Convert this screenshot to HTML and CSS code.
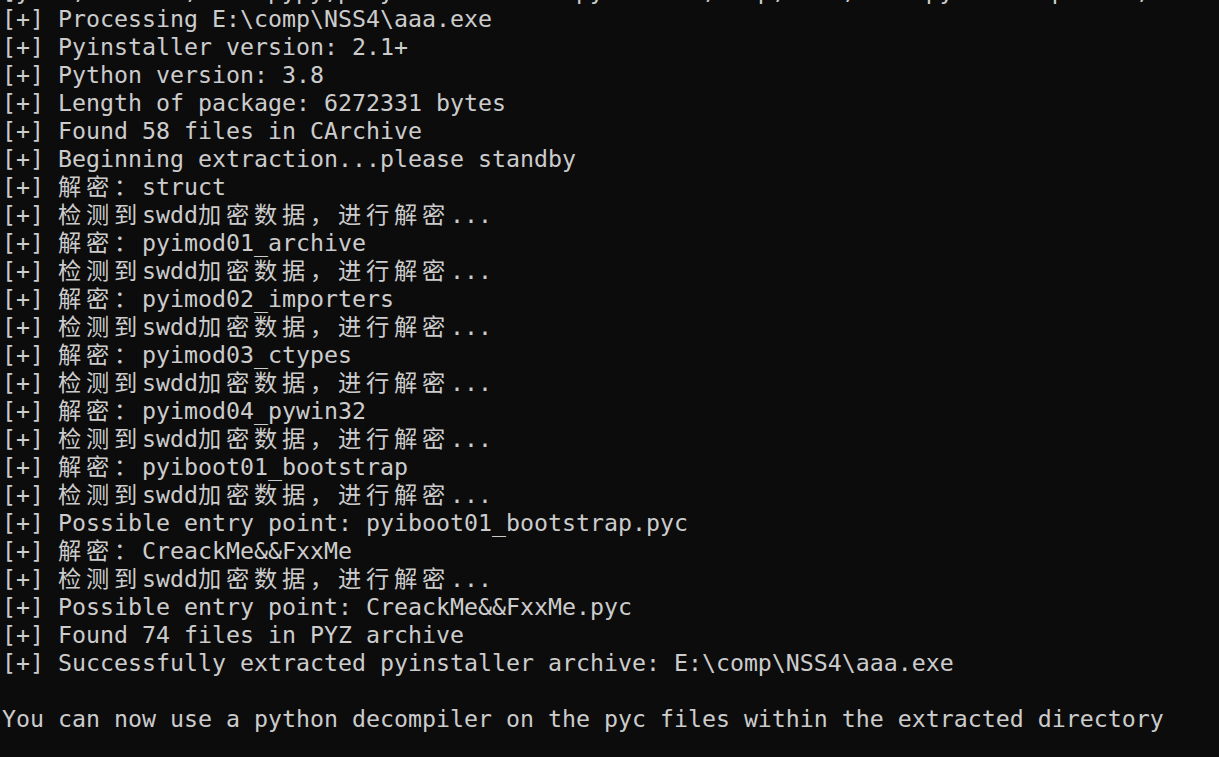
FILE: index.html
```html
<!DOCTYPE html>
<html lang="zh-CN">
<head>
<meta charset="utf-8">
<title>Terminal</title>
<link rel="stylesheet" href="styles.css">
</head>
<body>
<div class="term">
<div class="line">[y   ,       ,     pypy,p  y             py       ,   p,    ,     py       p     ,</div>
<div class="line">[+] Processing E:\comp\NSS4\aaa.exe</div>
<div class="line">[+] Pyinstaller version: 2.1+</div>
<div class="line">[+] Python version: 3.8</div>
<div class="line">[+] Length of package: 6272331 bytes</div>
<div class="line">[+] Found 58 files in CArchive</div>
<div class="line">[+] Beginning extraction...please standby</div>
<div class="line">[+] <span class="cjk">解密：</span>struct</div>
<div class="line">[+] <span class="cjk">检测到</span>swdd<span class="cjk">加密数据，进行解密</span>...</div>
<div class="line">[+] <span class="cjk">解密：</span>pyimod01_archive</div>
<div class="line">[+] <span class="cjk">检测到</span>swdd<span class="cjk">加密数据，进行解密</span>...</div>
<div class="line">[+] <span class="cjk">解密：</span>pyimod02_importers</div>
<div class="line">[+] <span class="cjk">检测到</span>swdd<span class="cjk">加密数据，进行解密</span>...</div>
<div class="line">[+] <span class="cjk">解密：</span>pyimod03_ctypes</div>
<div class="line">[+] <span class="cjk">检测到</span>swdd<span class="cjk">加密数据，进行解密</span>...</div>
<div class="line">[+] <span class="cjk">解密：</span>pyimod04_pywin32</div>
<div class="line">[+] <span class="cjk">检测到</span>swdd<span class="cjk">加密数据，进行解密</span>...</div>
<div class="line">[+] <span class="cjk">解密：</span>pyiboot01_bootstrap</div>
<div class="line">[+] <span class="cjk">检测到</span>swdd<span class="cjk">加密数据，进行解密</span>...</div>
<div class="line">[+] Possible entry point: pyiboot01_bootstrap.pyc</div>
<div class="line">[+] <span class="cjk">解密：</span>CreackMe&amp;&amp;FxxMe</div>
<div class="line">[+] <span class="cjk">检测到</span>swdd<span class="cjk">加密数据，进行解密</span>...</div>
<div class="line">[+] Possible entry point: CreackMe&amp;&amp;FxxMe.pyc</div>
<div class="line">[+] Found 74 files in PYZ archive</div>
<div class="line">[+] Successfully extracted pyinstaller archive: E:\comp\NSS4\aaa.exe</div>
<div class="line"></div>
<div class="line">You can now use a python decompiler on the pyc files within the extracted directory</div>
</div>
</body>
</html>
```
FILE: styles.css
```css
html, body {
  margin: 0;
  padding: 0;
  height: 100%;
  overflow: hidden;
  background: #0c0c0c;
}

.term {
  margin-top: -23px;
  padding-left: 2px;
  font-family: "DejaVu Sans Mono", "Noto Sans CJK SC", monospace;
  font-size: 23.25px;
  color: #cccccc;
}

.line {
  height: 28px;
  line-height: 28px;
  white-space: pre;
}

.cjk {
  letter-spacing: 4.75px;
}
```
